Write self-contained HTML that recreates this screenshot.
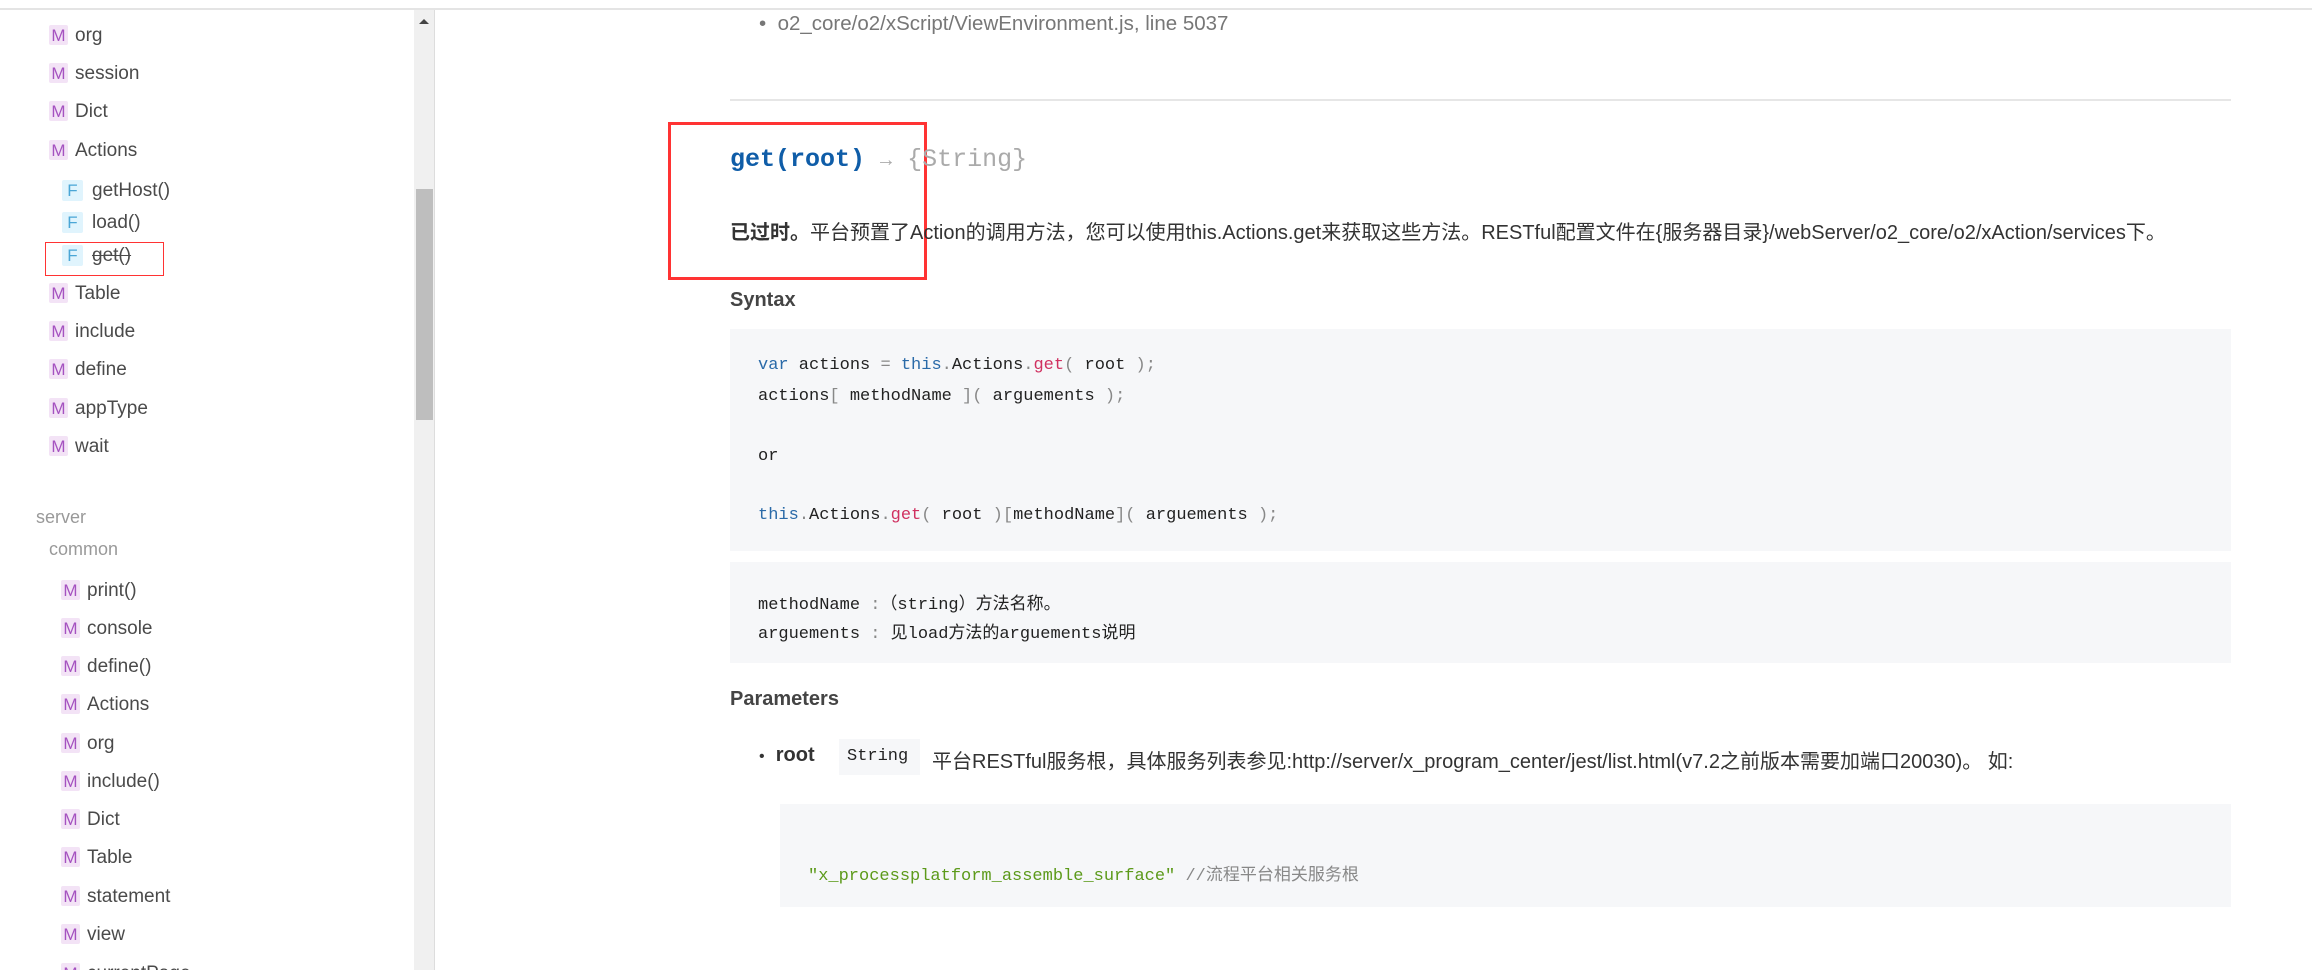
<!DOCTYPE html>
<html><head><meta charset="utf-8"><style>
*{margin:0;padding:0;box-sizing:border-box}
html,body{width:2312px;height:970px;overflow:hidden}
body{background:#fff;position:relative;font-family:"Liberation Sans","Noto Sans CJK SC",sans-serif;color:#454545}
.topline{position:absolute;left:0;top:8px;width:2312px;height:2px;background:#e4e4e4}
.sb{position:absolute;left:414px;top:10px;width:21px;height:960px;background:#f0f0f0;border-right:1px solid #ddd}
.thumb{position:absolute;left:416px;top:189px;width:17px;height:231px;background:#bebebe}
.arrow{position:absolute;left:419px;top:19px;width:0;height:0;border-left:5px solid transparent;border-right:5px solid transparent;border-bottom:5px solid #444}
.it{position:absolute;font-size:19px;line-height:22px;white-space:nowrap;color:#4a4a4a}
.ic{display:inline-block;width:19px;height:20px;line-height:21px;text-align:center;font-size:17px;margin-right:7px;vertical-align:top;border-radius:2px}
.m{background:#f3e3f6;color:#a552c0}
.f{background:#e0f4fd;color:#4aa6d6;width:21px;height:21px;margin-right:9px}
.grp{position:absolute;font-size:18px;color:#999}
.rbox{position:absolute;border:2px solid #f33}
.mono{font-family:"Liberation Mono","DejaVu Sans Mono",monospace}
.t{position:absolute;white-space:nowrap}
.code{position:absolute;background:#f6f7f9}
.cl{position:absolute;white-space:nowrap;font-family:"Liberation Mono","Noto Sans CJK SC",monospace;font-size:17px;color:#222}
.kw{color:#2a6aa8}.fn{color:#d03060}.pu{color:#888}
</style></head><body>
<div class="topline"></div>
<div class="sb"></div><div class="thumb"></div><div class="arrow"></div>

<div class="it" style="left:49px;top:25px"><span class="ic m">M</span>org</div>
<div class="it" style="left:49px;top:63px"><span class="ic m">M</span>session</div>
<div class="it" style="left:49px;top:101px"><span class="ic m">M</span>Dict</div>
<div class="it" style="left:49px;top:140px"><span class="ic m">M</span>Actions</div>
<div class="it" style="left:62px;top:180px"><span class="ic f">F</span>getHost()</div>
<div class="it" style="left:62px;top:212px"><span class="ic f">F</span>load()</div>
<div class="it" style="left:62px;top:245px"><span class="ic f">F</span><s>get()</s></div>
<div class="rbox" style="left:45px;top:242px;width:119px;height:34px;border-width:1px"></div>
<div class="it" style="left:49px;top:283px"><span class="ic m">M</span>Table</div>
<div class="it" style="left:49px;top:321px"><span class="ic m">M</span>include</div>
<div class="it" style="left:49px;top:359px"><span class="ic m">M</span>define</div>
<div class="it" style="left:49px;top:398px"><span class="ic m">M</span>appType</div>
<div class="it" style="left:49px;top:436px"><span class="ic m">M</span>wait</div>

<div class="grp" style="left:36px;top:507px">server</div>
<div class="grp" style="left:49px;top:539px">common</div>
<div class="it" style="left:61px;top:580px"><span class="ic m">M</span>print()</div>
<div class="it" style="left:61px;top:618px"><span class="ic m">M</span>console</div>
<div class="it" style="left:61px;top:656px"><span class="ic m">M</span>define()</div>
<div class="it" style="left:61px;top:694px"><span class="ic m">M</span>Actions</div>
<div class="it" style="left:61px;top:733px"><span class="ic m">M</span>org</div>
<div class="it" style="left:61px;top:771px"><span class="ic m">M</span>include()</div>
<div class="it" style="left:61px;top:809px"><span class="ic m">M</span>Dict</div>
<div class="it" style="left:61px;top:847px"><span class="ic m">M</span>Table</div>
<div class="it" style="left:61px;top:886px"><span class="ic m">M</span>statement</div>
<div class="it" style="left:61px;top:924px"><span class="ic m">M</span>view</div>
<div class="it" style="left:61px;top:963px"><span class="ic m">M</span>currentPage</div>

<!-- main -->
<div class="t" style="left:759px;top:12px;font-size:20.5px;color:#777">•&nbsp; o2_core/o2/xScript/ViewEnvironment.js, line 5037</div>
<div style="position:absolute;left:730px;top:99px;width:1501px;height:2px;background:#e6e6e6"></div>
<div class="rbox" style="left:668px;top:122px;width:259px;height:158px;border-width:3px"></div>
<div class="t mono" style="left:730px;top:145px;font-size:25px;font-weight:bold;color:#0f5da8">get(root) <span style="font-weight:normal;color:#aaa;font-size:20px">→</span> <span style="font-weight:normal;color:#aaa">{String}</span></div>
<div class="t" style="left:730px;top:216px;font-size:20px;color:#333"><b>已过时。</b>平台预置了Action的调用方法，您可以使用this.Actions.get来获取这些方法。RESTful配置文件在{服务器目录}/webServer/o2_core/o2/xAction/services下。</div>
<div class="t" style="left:730px;top:289px;font-size:20px;font-weight:bold;color:#444">Syntax</div>

<div class="code" style="left:730px;top:329px;width:1501px;height:222px"></div>
<div class="cl" style="left:758px;top:356px"><span class="kw">var</span> actions <span class="pu">=</span> <span class="kw">this</span><span class="pu">.</span>Actions<span class="pu">.</span><span class="fn">get</span><span class="pu">(</span> root <span class="pu">);</span></div>
<div class="cl" style="left:758px;top:387px">actions<span class="pu">[</span> methodName <span class="pu">](</span> arguements <span class="pu">);</span></div>
<div class="cl" style="left:758px;top:447px">or</div>
<div class="cl" style="left:758px;top:506px"><span class="kw">this</span><span class="pu">.</span>Actions<span class="pu">.</span><span class="fn">get</span><span class="pu">(</span> root <span class="pu">)[</span>methodName<span class="pu">](</span> arguements <span class="pu">);</span></div>

<div class="code" style="left:730px;top:562px;width:1501px;height:101px"></div>
<div class="cl" style="left:758px;top:589px">methodName <span class="pu">:</span>（string）方法名称。</div>
<div class="cl" style="left:758px;top:618px">arguements <span class="pu">:</span> 见load方法的arguements说明</div>

<div class="t" style="left:730px;top:688px;font-size:20px;font-weight:bold;color:#444">Parameters</div>
<div class="t" style="left:759px;top:744px;font-size:20px;color:#333"><span style="font-size:16px">•</span>&nbsp; <b>root</b></div>
<div style="position:absolute;left:839px;top:739px;width:81px;height:36px;background:#f6f7f9"></div>
<div class="cl" style="left:847px;top:747px">String</div>
<div class="t" style="left:932px;top:745px;font-size:20px;color:#333">平台RESTful服务根，具体服务列表参见:http://server/x_program_center/jest/list.html(v7.2之前版本需要加端口20030)。 如:</div>

<div class="code" style="left:780px;top:804px;width:1451px;height:103px"></div>
<div class="cl" style="left:808px;top:860px"><span style="color:#5c9a1a">"x_processplatform_assemble_surface"</span> <span style="color:#888">//流程平台相关服务根</span></div>
</body></html>
